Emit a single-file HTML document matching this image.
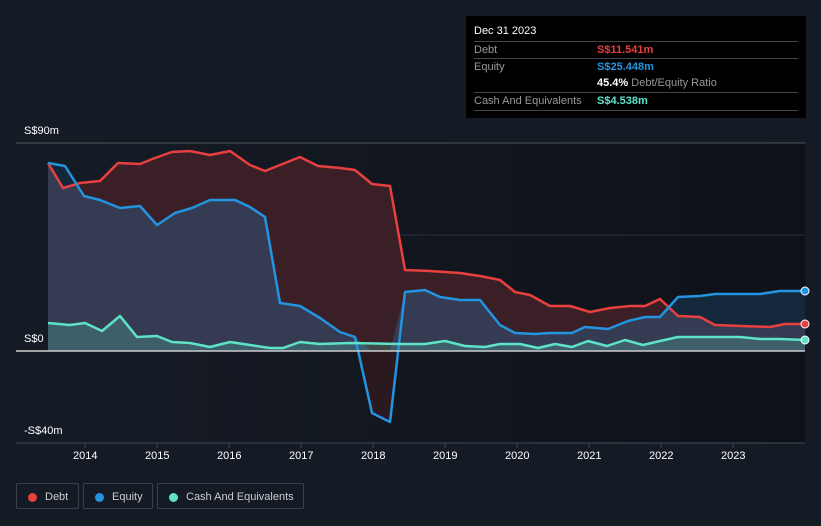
<!DOCTYPE html>
<html><head><meta charset="utf-8"><style>
body{margin:0;width:821px;height:526px;background:#151b25;font-family:"Liberation Sans",sans-serif;overflow:hidden;position:relative}
.t{position:absolute;color:#fff;font-size:11px}
.tip{position:absolute;left:466px;top:16px;width:340px;height:102px;background:#000;}
.tip .r{position:absolute;left:8px;width:324px;border-top:1px solid #444;font-size:11px;color:#999;}
.leg{position:absolute;top:483px;height:26px;border:1px solid #3a3f4a;border-radius:2px;color:#ccc;font-size:11px;line-height:26px;box-sizing:border-box}
.leg i{position:absolute;left:11px;top:9px;width:9px;height:9px;border-radius:50%}
</style></head><body>
<svg width="821" height="526" style="position:absolute;left:0;top:0">
<defs><linearGradient id="bg" x1="0" x2="1"><stop offset="0" stop-color="#151b25"/><stop offset="1" stop-color="#0e1118"/></linearGradient>
<clipPath id="dc"><polygon points="48,351 48,163 63,188 70,186 80,183 100,181 118,163 140,164 155,158 172,152 190,151 210,155 230,151 250,165 265,171 280,165 300,157 318,166 340,168 355,170 372,184 390,186 405,270 430,271 460,273 480,276 500,280 515,292 530,295 550,306 570,306 590,312 610,308 630,306 645,306 660,299 678,316 700,317 715,325 740,326 770,327 785,324 805,324 805,351"/></clipPath></defs>
<rect x="48" y="143" width="757" height="300" fill="url(#bg)"/>
<line x1="16" y1="143" x2="805" y2="143" stroke="#555" stroke-width="1"/>
<line x1="48" y1="235" x2="805" y2="235" stroke="#2a2f3a" stroke-width="1"/>
<polygon fill="#3a1f26" points="48,351 48,163 63,188 70,186 80,183 100,181 118,163 140,164 155,158 172,152 190,151 210,155 230,151 250,165 265,171 280,165 300,157 318,166 340,168 355,170 372,184 390,186 405,270 430,271 460,273 480,276 500,280 515,292 530,295 550,306 570,306 590,312 610,308 630,306 645,306 660,299 678,316 700,317 715,325 740,326 770,327 785,324 805,324 805,351"/>
<polygon fill="#14283b" points="48,351 48,163 65,166 84,196 100,200 120,208 140,206 157,225 175,213 192,208 210,200 235,200 250,207 265,217 280,303 300,306 320,318 340,332 355,337 372,413 390,422 405,292 425,290 440,297 460,300 480,300 500,325 515,333 535,334 550,333 572,333 585,327 608,329 628,321 645,317 660,317 678,297 700,296 715,294 760,294 780,291 805,291 805,351"/>
<polygon clip-path="url(#dc)" fill="#343b53" points="48,351 48,163 65,166 84,196 100,200 120,208 140,206 157,225 175,213 192,208 210,200 235,200 250,207 265,217 280,303 300,306 320,318 340,332 355,337 372,351 390,351 405,292 425,290 440,297 460,300 480,300 500,325 515,333 535,334 550,333 572,333 585,327 608,329 628,321 645,317 660,317 678,297 700,296 715,294 760,294 780,291 805,291 805,351"/>
<polygon fill="#2a1a20" points="360,351 372,413 390,422 398,351"/>
<polygon fill="rgba(90,200,180,0.25)" points="48,351 48,323 70,325 85,323 102,331 120,316 137,337 157,336 172,342 190,343 210,347 230,342 250,345 270,348 283,348 300,342 320,344 350,343 400,344 425,344 445,341 465,346 485,347 500,344 520,344 538,348 555,344 572,347 588,341 607,346 625,340 643,345 660,341 678,337 700,337 740,337 760,339 780,339 805,340 805,351"/>
<polyline fill="none" stroke="#e8403f" stroke-width="2.5" stroke-linejoin="round" points="48,163 63,188 70,186 80,183 100,181 118,163 140,164 155,158 172,152 190,151 210,155 230,151 250,165 265,171 280,165 300,157 318,166 340,168 355,170 372,184 390,186 405,270 430,271 460,273 480,276 500,280 515,292 530,295 550,306 570,306 590,312 610,308 630,306 645,306 660,299 678,316 700,317 715,325 740,326 770,327 785,324 805,324"/>
<polyline fill="none" stroke="#2394e0" stroke-width="2.5" stroke-linejoin="round" points="48,163 65,166 84,196 100,200 120,208 140,206 157,225 175,213 192,208 210,200 235,200 250,207 265,217 280,303 300,306 320,318 340,332 355,337 372,413 390,422 405,292 425,290 440,297 460,300 480,300 500,325 515,333 535,334 550,333 572,333 585,327 608,329 628,321 645,317 660,317 678,297 700,296 715,294 760,294 780,291 805,291"/>
<polyline fill="none" stroke="#5ee2c8" stroke-width="2.5" stroke-linejoin="round" points="48,323 70,325 85,323 102,331 120,316 137,337 157,336 172,342 190,343 210,347 230,342 250,345 270,348 283,348 300,342 320,344 350,343 400,344 425,344 445,341 465,346 485,347 500,344 520,344 538,348 555,344 572,347 588,341 607,346 625,340 643,345 660,341 678,337 700,337 740,337 760,339 780,339 805,340"/>
<line x1="16" y1="351" x2="805" y2="351" stroke="#ccc" stroke-width="1.5"/>
<line x1="16" y1="443" x2="805" y2="443" stroke="#444a55" stroke-width="1"/>
<g stroke="#444a55"><line x1="85" y1="443" x2="85" y2="448"/><line x1="157" y1="443" x2="157" y2="448"/><line x1="229" y1="443" x2="229" y2="448"/><line x1="301" y1="443" x2="301" y2="448"/><line x1="373" y1="443" x2="373" y2="448"/><line x1="445" y1="443" x2="445" y2="448"/><line x1="517" y1="443" x2="517" y2="448"/><line x1="589" y1="443" x2="589" y2="448"/><line x1="661" y1="443" x2="661" y2="448"/><line x1="733" y1="443" x2="733" y2="448"/></g>
<circle cx="805" cy="291" r="4" fill="#2394e0" stroke="#fff" stroke-width="1"/>
<circle cx="805" cy="324" r="4" fill="#e8403f" stroke="#fff" stroke-width="1"/>
<circle cx="805" cy="340" r="4" fill="#5ee2c8" stroke="#fff" stroke-width="1"/>
</svg>
<div class="t" style="left:24px;top:125px">S$90m</div>
<div class="t" style="left:24px;top:333px">S$0</div>
<div class="t" style="left:24px;top:425px">-S$40m</div>
<div class="t" style="left:73px;top:450px">2014</div><div class="t" style="left:145px;top:450px">2015</div><div class="t" style="left:217px;top:450px">2016</div><div class="t" style="left:289px;top:450px">2017</div><div class="t" style="left:361px;top:450px">2018</div><div class="t" style="left:433px;top:450px">2019</div><div class="t" style="left:505px;top:450px">2020</div><div class="t" style="left:577px;top:450px">2021</div><div class="t" style="left:649px;top:450px">2022</div><div class="t" style="left:721px;top:450px">2023</div>
<div class="tip">
<div style="position:absolute;left:8px;top:9px;color:#fff;font-size:11px">Dec 31 2023</div>
<div class="r" style="top:25px;height:17px;line-height:17px">Debt<span style="position:absolute;left:123px;color:#e8403f;font-weight:bold">S$11.541m</span></div>
<div class="r" style="top:42px;height:17px;line-height:17px;border-top:1px solid #444">Equity<span style="position:absolute;left:123px;color:#2394e0;font-weight:bold">S$25.448m</span></div>
<div class="r" style="top:59px;height:17px;line-height:17px;border-top:none"><span style="position:absolute;left:123px"><b style="color:#fff">45.4%</b> Debt/Equity Ratio</span></div>
<div class="r" style="top:76px;height:17px;line-height:17px;border-bottom:1px solid #444">Cash And Equivalents<span style="position:absolute;left:123px;color:#5ee2c8;font-weight:bold">S$4.538m</span></div>
</div>
<div class="leg" style="left:16px;width:63px"><i style="background:#e8403f"></i><span style="position:absolute;left:28px">Debt</span></div>
<div class="leg" style="left:83px;width:70px"><i style="background:#2394e0"></i><span style="position:absolute;left:28px">Equity</span></div>
<div class="leg" style="left:157px;width:147px"><i style="background:#5ee2c8"></i><span style="position:absolute;left:28px">Cash And Equivalents</span></div>
</body></html>
